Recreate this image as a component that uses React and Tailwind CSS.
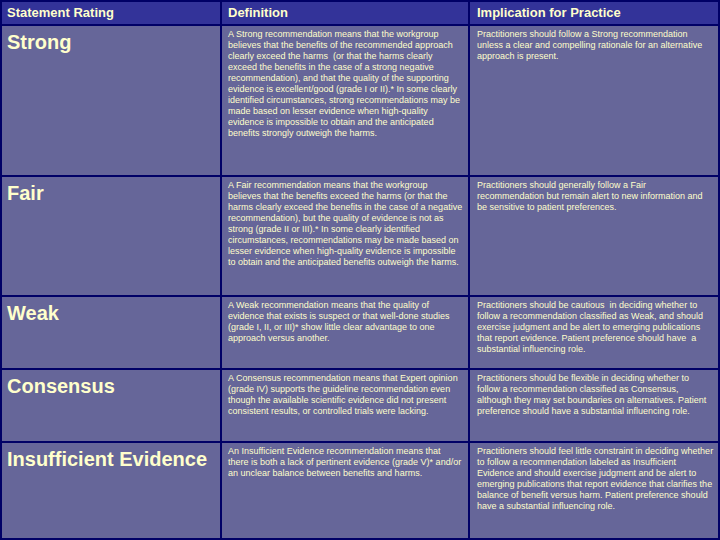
const ROWS = [
  {
    label: 'Strong',
    def: [
      'A Strong recommendation means that the workgroup',
      'believes that the benefits of the recommended approach',
      'clearly exceed the harms  (or that the harms clearly',
      'exceed the benefits in the case of a strong negative',
      'recommendation), and that the quality of the supporting',
      'evidence is excellent/good (grade I or II).* In some clearly',
      'identified circumstances, strong recommendations may be',
      'made based on lesser evidence when high-quality',
      'evidence is impossible to obtain and the anticipated',
      'benefits strongly outweigh the harms.',
    ],
    impl: [
      'Practitioners should follow a Strong recommendation',
      'unless a clear and compelling rationale for an alternative',
      'approach is present.',
    ],
  },
  {
    label: 'Fair',
    def: [
      'A Fair recommendation means that the workgroup',
      'believes that the benefits exceed the harms (or that the',
      'harms clearly exceed the benefits in the case of a negative',
      'recommendation), but the quality of evidence is not as',
      'strong (grade II or III).* In some clearly identified',
      'circumstances, recommendations may be made based on',
      'lesser evidence when high-quality evidence is impossible',
      'to obtain and the anticipated benefits outweigh the harms.',
    ],
    impl: [
      'Practitioners should generally follow a Fair',
      'recommendation but remain alert to new information and',
      'be sensitive to patient preferences.',
    ],
  },
  {
    label: 'Weak',
    def: [
      'A Weak recommendation means that the quality of',
      'evidence that exists is suspect or that well-done studies',
      '(grade I, II, or III)* show little clear advantage to one',
      'approach versus another.',
    ],
    impl: [
      'Practitioners should be cautious  in deciding whether to',
      'follow a recommendation classified as Weak, and should',
      'exercise judgment and be alert to emerging publications',
      'that report evidence. Patient preference should have  a',
      'substantial influencing role.',
    ],
  },
  {
    label: 'Consensus',
    def: [
      'A Consensus recommendation means that Expert opinion',
      '(grade IV) supports the guideline recommendation even',
      'though the available scientific evidence did not present',
      'consistent results, or controlled trials were lacking.',
    ],
    impl: [
      'Practitioners should be flexible in deciding whether to',
      'follow a recommendation classified as Consensus,',
      'although they may set boundaries on alternatives. Patient',
      'preference should have a substantial influencing role.',
    ],
  },
  {
    label: 'Insufficient Evidence',
    def: [
      'An Insufficient Evidence recommendation means that',
      'there is both a lack of pertinent evidence (grade V)* and/or',
      'an unclear balance between benefits and harms.',
    ],
    impl: [
      'Practitioners should feel little constraint in deciding whether',
      'to follow a recommendation labeled as Insufficient',
      'Evidence and should exercise judgment and be alert to',
      'emerging publications that report evidence that clarifies the',
      'balance of benefit versus harm. Patient preference should',
      'have a substantial influencing role.',
    ],
  },
];

function Lines({ lines }) {
  return (
    <div className="text-[9px] leading-[11px]">
      {lines.map((l, i) => (
        <div key={i} className="whitespace-pre">{l}</div>
      ))}
    </div>
  );
}

export default function App() {
  return (
    <div
      className="w-[720px] h-[540px] bg-[#000066] p-[2px] grid grid-cols-[218px_246px_248px] grid-rows-[22px_149px_118px_71px_71px_95px] gap-[2px] text-[#ffffcc] overflow-hidden"
      style={{ fontFamily: '"Liberation Sans", Arial, sans-serif' }}
    >
      {/* Header */}
      <div className="bg-[#333399] flex items-center pl-[5px] text-[13px] font-bold">Statement Rating</div>
      <div className="bg-[#333399] flex items-center pl-[6px] text-[13px] font-bold">Definition</div>
      <div className="bg-[#333399] flex items-center pl-[7px] text-[13px] font-bold">Implication for Practice</div>

      {ROWS.map(r => (
        <div key={r.label} className="contents">
          <div className="bg-[#666699] pl-[5px] pt-[4px] text-[20px] leading-[24px] font-bold">{r.label}</div>
          <div className="bg-[#666699] pl-[6px] pt-[3px] overflow-hidden"><Lines lines={r.def} /></div>
          <div className="bg-[#666699] pl-[7px] pt-[3px] overflow-hidden"><Lines lines={r.impl} /></div>
        </div>
      ))}
    </div>
  );
}
